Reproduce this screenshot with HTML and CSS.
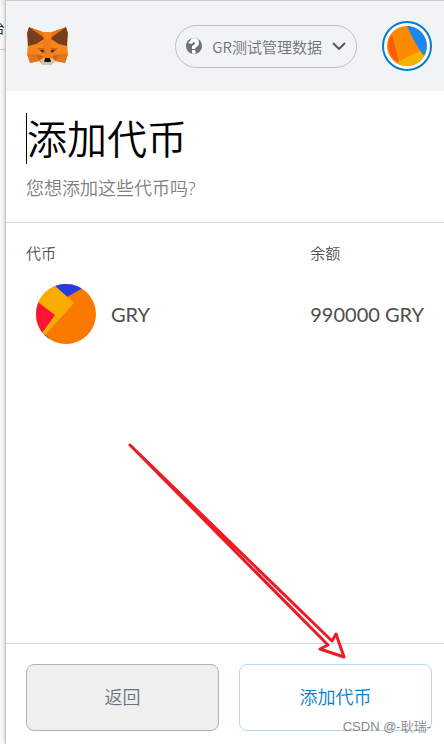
FILE: index.html
```html
<!DOCTYPE html>
<html lang="zh-CN">
<head>
<meta charset="utf-8">
<meta name="viewport" content="width=device-width, initial-scale=1">
<title>添加代币</title>
<link rel="stylesheet" href="styles.css">
</head>
<body>
<div class="backdrop" aria-hidden="true"><div class="backdrop-top"></div><div class="backdrop-tab">台</div></div>
<div class="popup">
  <header class="app-header">
    <svg class="fox" viewBox="0 0 42 40" aria-label="MetaMask" role="img">
      <path fill="#f6851b" d="M3 1 17 6h9L40 1l1 16 1 11-3 9-10-2-4 4h-8l-4-4-9 2-3-9 1-11z"/>
      <path fill="#e2761b" d="M3 1 17 6l1 6zM40 1 26 6l-1 6zM1 28h14l-2 7-9 2zM42 28H28l2 7 9 2z"/>
      <path fill="#763e1a" d="M3 1 17 11 18 13 10 18 2 20 1 7zM40 1 26 11l-1 2 8 5 8 2 1-13z"/>
      <path fill="#cd6116" d="M11 22h7l1 5-4-1zM32 22h-7l-1 5 4-1zM10 29l7 1-3 5zM33 29l-7 1 3 5z"/>
      <path fill="#e4761b" d="M18 13h7l1 8-2 11h-5l-2-11z" opacity=".4"/>
      <path fill="#233447" d="M14 24l4 0-1 3zM29 24l-4 0 1 3z"/>
      <path fill="#d7c1b3" d="M14 34l4-2h7l4 2-4 5h-8z"/>
      <path fill="#161616" d="M19 32h5l1 4h-7z"/>
    </svg>
    <button class="network" type="button">
      <svg class="network-icon" viewBox="0 0 16 16" aria-hidden="true">
        <circle cx="8" cy="8" r="8" fill="#6a737d"/>
        <path fill="#fff" d="M4 3Q5 0 8 0q5 0 5 5 0 3-3 4l-1 2H6V8l3-2q0-2-2-2L6 6 2 5zM6 12h3l1 3-2 1-2-1z"/>
      </svg>
      <span class="network-name">GR测试管理数据</span>
      <svg class="chevron" viewBox="0 0 14 8" aria-hidden="true"><path d="M1 1l6 6 6-6"/></svg>
    </button>
    <button class="account" type="button" aria-label="账户">
      <svg viewBox="0 0 40 40" aria-hidden="true">
        <circle cx="20" cy="20" r="20" fill="#fa8a00"/>
        <path fill="#1788f5" d="M20 0A20 20 0 0 1 37 30Q28 18 20 0z"/>
        <path fill="#f2b400" d="M11 36 33 25 37 30A20 20 0 0 1 11 38z"/>
        <path fill="#fc5c05" d="M5 8 12 37A20 20 0 0 1 5 8z"/>
      </svg>
    </button>
  </header>
  <section class="intro">
    <h1>添加代币</h1>
    <p>您想添加这些代币吗?</p>
  </section>
  <main class="tokens">
    <table>
      <thead><tr><th scope="col">代币</th><th class="balance" scope="col">余额</th></tr></thead>
      <tbody><tr>
        <td><div class="token">
          <svg class="token-icon" viewBox="0 0 60 60" aria-hidden="true">
            <defs><clipPath id="round"><circle cx="30" cy="30" r="30"/></clipPath></defs>
            <g clip-path="url(#round)">
              <path fill="#fa7900" d="M0 0h60v60H0z"/>
              <path fill="#263be0" d="M15 0h35L45 5 31 13zM6 48l7 6-3 4z"/>
              <path fill="#faad00" d="M0 0h17l21 19L9 51 0 52z"/>
              <path fill="#fc1435" d="M0 17 3 19l16 12L6 49 0 50z"/>
            </g>
          </svg>
          <span>GRY</span>
        </div></td>
        <td class="balance">990000 GRY</td>
      </tr></tbody>
    </table>
  </main>
  <footer class="actions">
    <button class="action back" type="button">返回</button>
    <button class="action confirm" type="button">添加代币</button>
    <span class="watermark">CSDN @-耿瑞-</span>
  </footer>
  <svg class="arrow" viewBox="0 0 220 218" aria-hidden="true">
    <path d="M2 2 204 198l4-7 8 23-24-8 8-4z"/>
  </svg>
</div>
</body>
</html>
```
FILE: styles.css
```css
* { box-sizing: border-box; }

body {
  display: flex;
  min-height: 100vh;
  margin: 0;
  background: #fff;
  color: #4d4d4d;
  font-family: "Noto Sans", "Noto Sans CJK SC", sans-serif;
}

button { font: inherit; cursor: pointer; }

.backdrop {
  flex: 0 0 5px;
  overflow: hidden;
  background: #fafafa;
}

.backdrop-top { height: 5px; background: #eef0f2; }

.backdrop-tab {
  display: flex;
  justify-content: flex-end;
  height: 45px;
  padding-top: 12px;
  border-bottom: 1px solid #ccc;
  color: #234;
  font-size: 14px;
}

.popup {
  position: relative;
  display: flex;
  flex: 1;
  flex-direction: column;
  min-width: 0;
  border-top: 1px solid #ccc;
  border-left: 1px solid #c8c8c8;
  background: #fff;
  box-shadow: 0 0 4px rgba(0, 0, 0, 0.25);
}

.app-header {
  display: flex;
  align-items: center;
  height: 90px;
  padding: 0 12px 0 20px;
  background: #f2f3f4;
}

.fox { width: 42px; height: 40px; }

.network {
  display: flex;
  align-items: center;
  height: 43px;
  margin-left: auto;
  padding: 0 10px;
  border: 1px solid #bbc0c5;
  border-radius: 22px;
  background: none;
  color: #6a737d;
  font-family: "Noto Sans CJK SC", sans-serif;
  font-size: 15px;
  font-weight: 350;
}

.network-icon { width: 16px; height: 16px; }
.network-name { margin: 0 10px; }
.chevron { width: 14px; height: 8px; }

.chevron path { fill: none; stroke: #535a61; stroke-width: 2; }

.account {
  width: 50px;
  height: 50px;
  margin-left: 25px;
  padding: 3px;
  border: 2px solid #037dd6;
  border-radius: 50%;
  background: #fff;
}

.account svg { display: block; width: 40px; height: 40px; }

.intro {
  padding: 22px 20px;
  border-bottom: 1px solid #d2d8dd;
}

h1 {
  width: max-content;
  margin: 0;
  border-left: 1px solid #000;
  color: #000;
  font-size: 40px;
  font-weight: 350;
  line-height: 51px;
}

.intro p {
  margin: 12px 0 0;
  color: #808080;
  font-size: 18px;
  font-weight: 350;
  line-height: 24px;
}

.tokens { flex: 1; padding: 19px 0 20px 20px; }

table {
  width: 100%;
  border-collapse: collapse;
  table-layout: fixed;
  text-align: left;
}

th {
  padding: 0;
  font-size: 15px;
  font-weight: 350;
  line-height: 22px;
}

td {
  padding: 20px 0;
  font-family: Lato, sans-serif;
  font-size: 20px;
  white-space: nowrap;
}

.balance { width: 32%; }

.token { display: flex; align-items: center; gap: 15px; padding-left: 10px; }
.token-icon { width: 60px; height: 60px; }

.actions {
  position: relative;
  display: flex;
  gap: 20px;
  padding: 20px 12px 13px 20px;
  border-top: 1px solid #d2d8dd;
}

.action {
  flex: 1;
  height: 67px;
  padding: 0 0 4px;
  border: 1px solid;
  border-radius: 8px;
  font-size: 18px;
  font-weight: 350;
}

.back { border-color: #b3b3b3; background: #efefef; color: #6a737d; }
.confirm { border-color: #b0d8f3; background: #fff; color: #037dd6; }

.watermark {
  position: absolute;
  right: 13px;
  bottom: 7px;
  color: #888;
  font-family: "Liberation Sans", "Noto Sans CJK SC", sans-serif;
  font-size: 13px;
  font-weight: 350;
  line-height: 20px;
}

.arrow {
  position: absolute;
  right: 96px;
  bottom: 83px;
  width: 220px;
  height: 218px;
  pointer-events: none;
}

.arrow path { fill: none; stroke: #ed1c24; stroke-width: 3; stroke-linejoin: round; }
```
